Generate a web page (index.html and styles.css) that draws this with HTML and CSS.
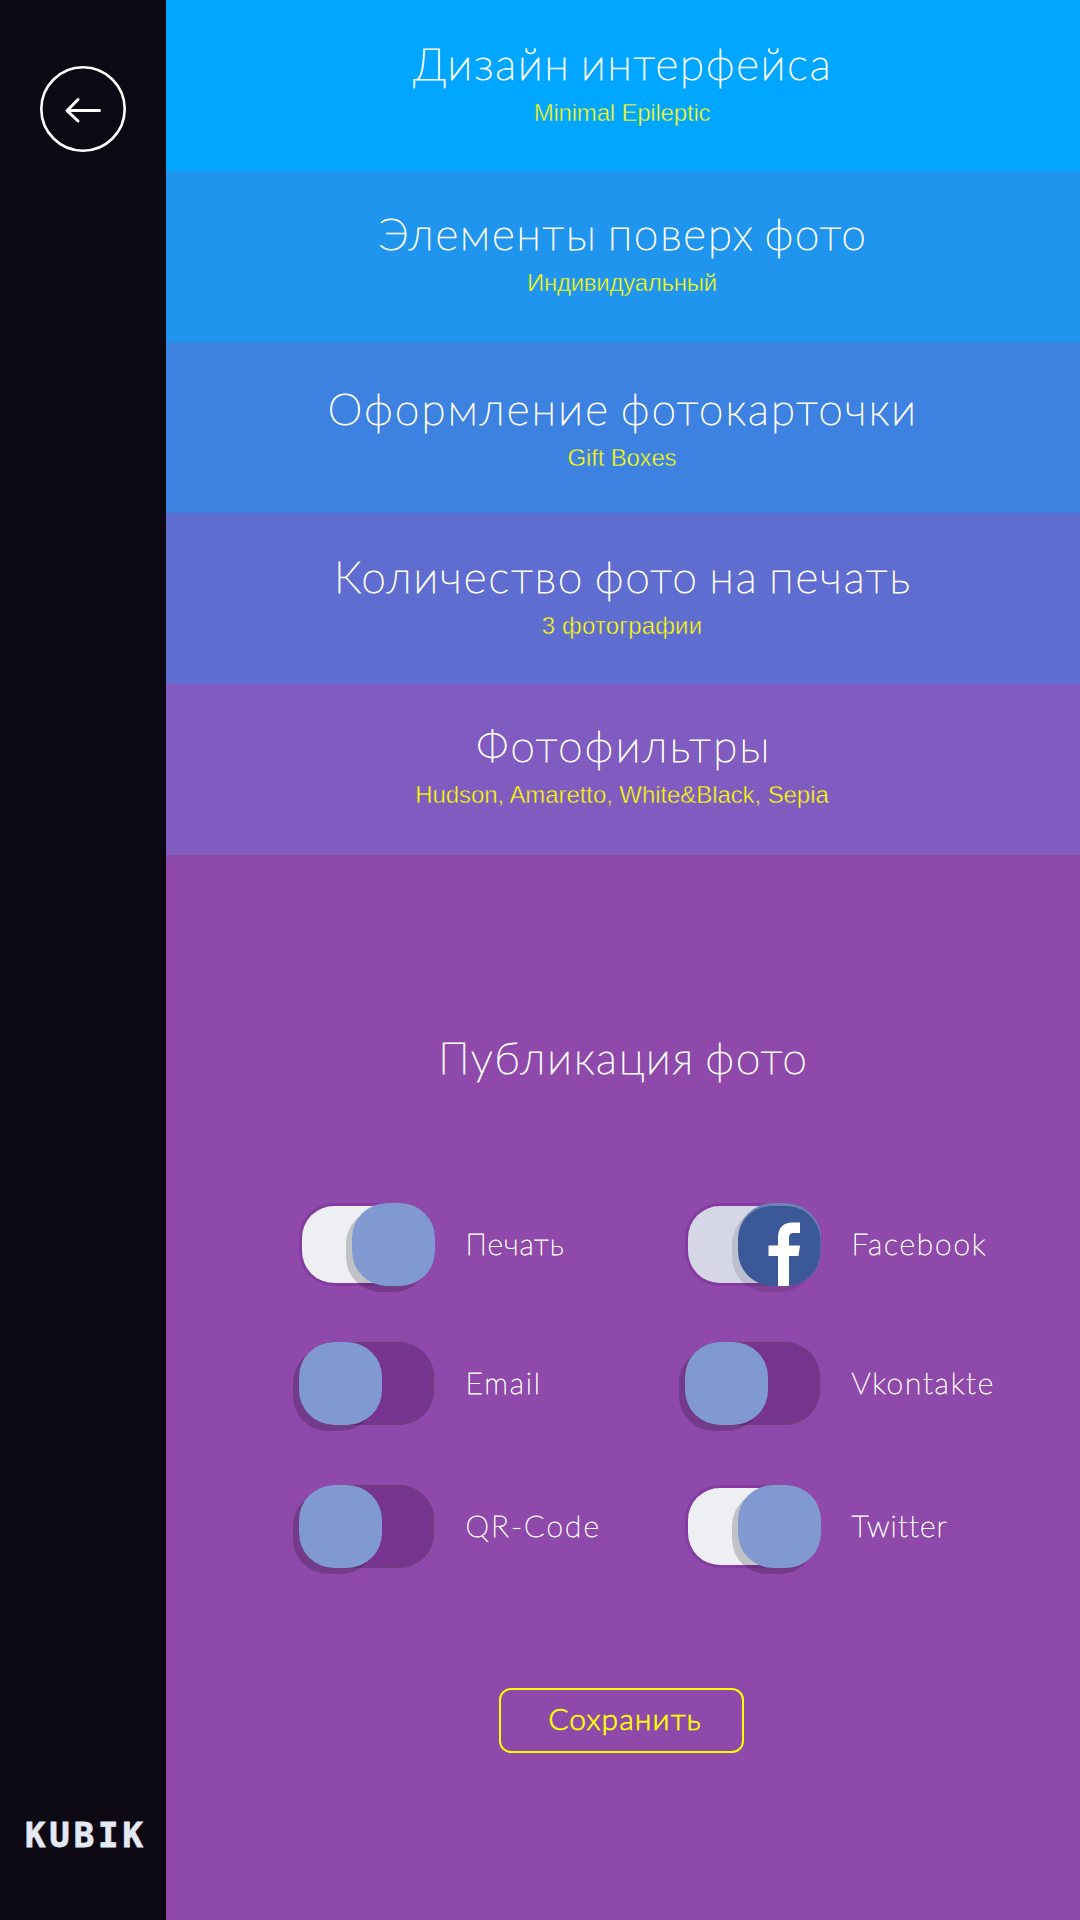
FILE: index.html
```html
<!DOCTYPE html>
<html lang="ru">
<head>
<meta charset="utf-8">
<title>Kubik</title>
<link rel="stylesheet" href="styles.css">
</head>
<body>
<div class="app">
  <aside class="sidebar">
    <a class="back" aria-label="Назад">
      <svg width="86" height="86" viewBox="0 0 86 86" fill="none" stroke="#fff" stroke-linecap="round" stroke-linejoin="round">
        <circle cx="43" cy="43" r="41.7" stroke-width="2.6"/>
        <path d="M59.5 44.5H27M38 33.5L27 44.7L38 55" stroke-width="3"/>
      </svg>
    </a>
    <div class="logo">KUBIK</div>
  </aside>
  <main class="content">
    <section class="option option-design"><h2>Дизайн интерфейса</h2><p>Minimal Epileptic</p></section>
    <section class="option option-overlay"><h2>Элементы поверх фото</h2><p>Индивидуальный</p></section>
    <section class="option option-card"><h2>Оформление фотокарточки</h2><p>Gift Boxes</p></section>
    <section class="option option-count"><h2>Количество фото на печать</h2><p>3 фотографии</p></section>
    <section class="option option-filters"><h2>Фотофильтры</h2><p>Hudson, Amaretto, White&amp;Black, Sepia</p></section>
    <section class="publish">
      <h2>Публикация фото</h2>
      <div class="switches">
        <div class="item print"><span class="switch on"><i class="knob"></i></span><span class="label">Печать</span></div>
        <div class="item facebook"><span class="switch on brand"><i class="knob"><svg width="83" height="83" viewBox="0 0 83 83">
          <path fill="#3b5998" d="M35 3H48C67 3 82.500 18 82.500 38V48C82.500 67 68 83 48 83H35C15 83 0 68 0 48V38C0 18 15 3 35 3Z"/>
          <path fill="#fff" d="M40 83V53H30.500V42.500H40V35C40 24 46 19.500 54 19.500H62V30H56C52 30 51 32 51 35.500V42.500H62L60.500 53H51V83Z"/>
        </svg></i></span><span class="label">Facebook</span></div>
        <div class="item email"><span class="switch"><i class="knob"></i></span><span class="label">Email</span></div>
        <div class="item vk"><span class="switch"><i class="knob"></i></span><span class="label">Vkontakte</span></div>
        <div class="item qr"><span class="switch"><i class="knob"></i></span><span class="label">QR-Code</span></div>
        <div class="item twitter"><span class="switch on"><i class="knob"></i></span><span class="label">Twitter</span></div>
      </div>
      <button class="save" type="button">Сохранить</button>
    </section>
  </main>
</div>
</body>
</html>
```
FILE: styles.css
```css
* { box-sizing: border-box; margin: 0; padding: 0; }
body { background: #8e49aa; }
.app { display: flex; width: 1080px; height: 1920px; font-family: Lato, "Open Sans", sans-serif; color: #fff; }

.sidebar {
  display: flex; flex-direction: column; justify-content: space-between;
  width: 166px; background: #0d0914; padding: 66px 0 65px;
}
.back { display: block; width: 86px; height: 86px; margin-left: 40px; }
.back svg { display: block; }
.logo {
  margin-left: 25px; color: #e4e9f4; letter-spacing: 3.9px;
  font: bold 34px/40px "DejaVu Sans Mono", monospace;
  -webkit-text-stroke: .8px #e4e9f4;
}

.content { flex: 1; display: flex; flex-direction: column; }
h2 {
  font-size: 44px; line-height: 50px; font-weight: 100; white-space: nowrap;
  word-spacing: -4px; -webkit-text-stroke: 1.1px #fff;
}
.option { height: 171px; text-align: center; padding-top: 38px; }
.option p {
  margin-top: 10px; padding-right: 2px; color: #ff0;
  font: 24px/30px "Liberation Sans", Arial, sans-serif;
  -webkit-text-stroke: .45px var(--band);
}
.option { background: var(--band); }
.option-design { --band: #00a6ff; }
.option-design h2 { letter-spacing: 1.9px; }
.option-design p { letter-spacing: -.2px; }
.option-overlay { --band: #2095ee; padding-top: 37px; }
.option-overlay h2 { letter-spacing: 1.9px; }
.option-overlay p { letter-spacing: -.25px; }
.option-card { --band: #3d82e0; padding-top: 41px; }
.option-card h2 { letter-spacing: 2.3px; }
.option-card p { letter-spacing: -.19px; }
.option-count { --band: #5f6dd0; }
.option-count h2 { letter-spacing: 2.1px; }
.option-count p { letter-spacing: .15px; }
.option-filters { --band: #805bc0; padding-top: 36px; }
.option-filters h2 { letter-spacing: 2.45px; padding-left: 2px; }
.option-filters p { letter-spacing: -.08px; }

.publish { flex: 1; background: #8e49aa; padding-top: 177px; }
.publish h2 { text-align: center; letter-spacing: 2px; padding-left: 1px; }
.switches {
  display: grid; grid-template-columns: 386px 386px; grid-template-rows: 139px 143px 83px;
  align-items: start; margin-top: 121px; padding-left: 133px;
}
.item { display: flex; align-items: center; gap: 30px; height: 83px; }
.label {
  font-size: 30px; line-height: 36px; font-weight: 100; padding: 0 0 4px .5px;
  -webkit-text-stroke: .8px #fff; white-space: nowrap;
}
.print .label { letter-spacing: 1px; }
.email .label { letter-spacing: 1.8px; }
.qr .label { letter-spacing: 2.1px; }
.facebook .label, .vk .label { letter-spacing: 1.86px; }
.twitter .label { letter-spacing: 1.15px; }

.switch {
  display: flex; width: 135px; height: 83px; margin-right: 1px; border-radius: 35px;
  background: #773390; box-shadow: inset 0 0 0 3px #733987;
}
.switch.on {
  width: 130px; height: 77px; margin: 0 3px; border-radius: 32px;
  align-items: center; justify-content: flex-end;
  background: #eeeff3; box-shadow: 0 0 0 3px #853ba2;
}
.switch.brand { background: #d6d7e6; }
.knob {
  flex: none; display: block; width: 83px; height: 83px; border-radius: 35px;
  background: #809ad1; box-shadow: -6px 6px 0 rgba(0, 0, 0, .19);
}
.on .knob { margin-right: -3px; }
.brand .knob { background: #6b83b3; box-shadow: -6px 6px 0 rgba(0, 0, 0, .11); overflow: hidden; }
.brand svg { display: block; }

.save {
  display: block; width: 245px; height: 65px; margin: 120px 0 0 333px; padding: 0 0 5px 7px;
  border: 2px solid #ff0; border-radius: 12px; background: none; color: #ff0;
  font: 300 30px/36px Lato, "Open Sans", sans-serif; letter-spacing: 1.09px;
  -webkit-text-stroke: .6px #ff0;
}
```
